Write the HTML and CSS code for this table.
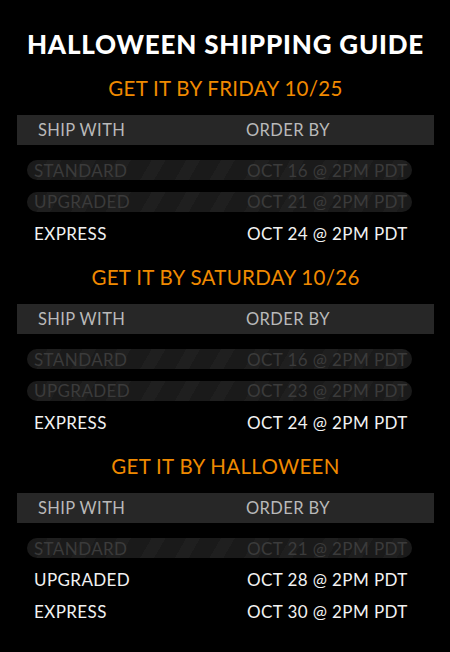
FILE: index.html
```html
<!DOCTYPE html>
<html>
<head>
<meta charset="utf-8">
<link rel="stylesheet" href="styles.css">
</head>
<body>
<main class="guide">
  <h1 class="title">HALLOWEEN SHIPPING GUIDE</h1>

  <section class="block">
    <h2 class="heading">GET IT BY FRIDAY 10/25</h2>
    <div class="bar"><span class="col-a">SHIP WITH</span><span class="col-b">ORDER BY</span></div>
    <div class="rows">
      <div class="row past"><span class="col-a">STANDARD</span><span class="col-b">OCT 16 @ 2PM PDT</span></div>
      <div class="row past"><span class="col-a">UPGRADED</span><span class="col-b">OCT 21 @ 2PM PDT</span></div>
      <div class="row"><span class="col-a">EXPRESS</span><span class="col-b">OCT 24 @ 2PM PDT</span></div>
    </div>
  </section>

  <section class="block">
    <h2 class="heading">GET IT BY SATURDAY 10/26</h2>
    <div class="bar"><span class="col-a">SHIP WITH</span><span class="col-b">ORDER BY</span></div>
    <div class="rows">
      <div class="row past"><span class="col-a">STANDARD</span><span class="col-b">OCT 16 @ 2PM PDT</span></div>
      <div class="row past"><span class="col-a">UPGRADED</span><span class="col-b">OCT 23 @ 2PM PDT</span></div>
      <div class="row"><span class="col-a">EXPRESS</span><span class="col-b">OCT 24 @ 2PM PDT</span></div>
    </div>
  </section>

  <section class="block">
    <h2 class="heading">GET IT BY HALLOWEEN</h2>
    <div class="bar"><span class="col-a">SHIP WITH</span><span class="col-b">ORDER BY</span></div>
    <div class="rows">
      <div class="row past"><span class="col-a">STANDARD</span><span class="col-b">OCT 21 @ 2PM PDT</span></div>
      <div class="row"><span class="col-a">UPGRADED</span><span class="col-b">OCT 28 @ 2PM PDT</span></div>
      <div class="row"><span class="col-a">EXPRESS</span><span class="col-b">OCT 30 @ 2PM PDT</span></div>
    </div>
  </section>
</main>
</body>
</html>
```

FILE: styles.css
```css
html, body {
  margin: 0;
  padding: 0;
  background: #000;
}

body {
  width: 450px;
  height: 652px;
  overflow: hidden;
  font-family: Lato, "Open Sans", sans-serif;
  color: #fff;
}

.guide {
  padding: 28px 16px 0 17px;
}

.title {
  margin: 0;
  font-size: 26px;
  font-weight: 900;
  line-height: 32px;
  text-align: center;
  letter-spacing: 0.8px;
  color: #fff;
}

.block {
  margin-top: 21.5px;
  display: flex;
  flex-direction: column;
}

.title + .block {
  margin-top: 15.5px;
}

.heading {
  margin: 0;
  font-size: 20.5px;
  font-weight: 400;
  line-height: 24px;
  text-align: center;
  color: #f08a00;
  letter-spacing: 0.3px;
}

.bar {
  margin-top: 15.5px;
  height: 30px;
  background: #272727;
  display: flex;
  align-items: center;
  padding-left: 21px;
  color: #b9b9b9;
  font-size: 16.5px;
  letter-spacing: 0.4px;
}

.bar .col-a {
  width: 208px;
}

.rows {
  margin-top: 15px;
  display: flex;
  flex-direction: column;
  gap: 11.5px;
}

.row {
  height: 20px;
  margin-left: 10px;
  width: 385px;
  box-sizing: border-box;
  padding-left: 7px;
  display: flex;
  align-items: center;
  font-size: 17px;
  letter-spacing: 0.4px;
  color: #f2f2f2;
  border-radius: 10px;
}

.row .col-a {
  width: 213px;
}

.row.past {
  color: #3b3b3b;
  background: repeating-linear-gradient(120deg, #1a1a1a 0 18px, #1f1f1f 18px 30px);
}
```
